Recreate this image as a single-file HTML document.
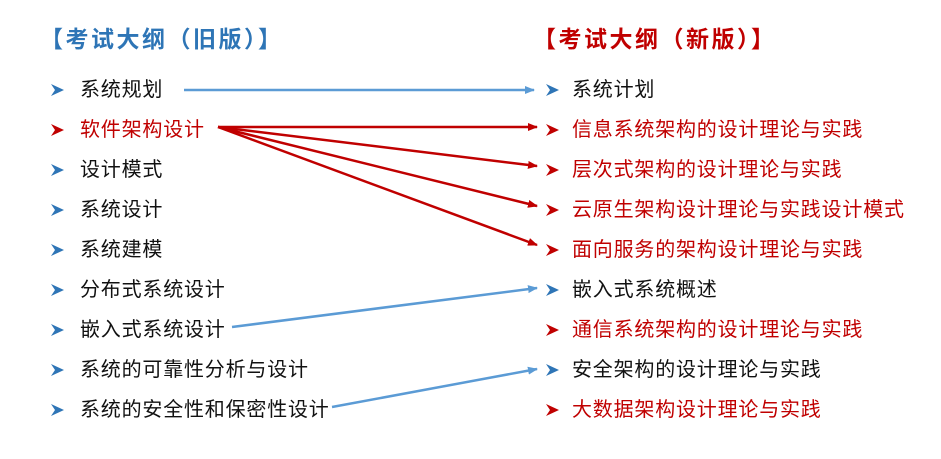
<!DOCTYPE html>
<html><head><meta charset="utf-8"><style>
body{margin:0;width:941px;height:459px;background:#fff;position:relative;overflow:hidden;font-family:"Liberation Sans","Noto Sans CJK SC",sans-serif}
.t{position:absolute;font-size:20px;letter-spacing:0.8px;line-height:24px;white-space:nowrap;color:#111}
.r{color:#c00000}
.h{position:absolute;font-size:23px;letter-spacing:2.5px;font-weight:bold;line-height:28px;white-space:nowrap}
</style></head><body>
<div class="h" style="left:40px;top:25px;color:#2e75b6">【考试大纲（旧版）】</div>
<div class="h" style="left:533px;top:25px;color:#c00000">【考试大纲（新版）】</div>

<div class="t" style="left:80px;top:78px">系统规划</div>
<div class="t r" style="left:80px;top:118px">软件架构设计</div>
<div class="t" style="left:80px;top:158px">设计模式</div>
<div class="t" style="left:80px;top:198px">系统设计</div>
<div class="t" style="left:80px;top:238px">系统建模</div>
<div class="t" style="left:80px;top:278px">分布式系统设计</div>
<div class="t" style="left:80px;top:318px">嵌入式系统设计</div>
<div class="t" style="left:80px;top:358px">系统的可靠性分析与设计</div>
<div class="t" style="left:80px;top:398px">系统的安全性和保密性设计</div>

<div class="t" style="left:572px;top:78px">系统计划</div>
<div class="t r" style="left:572px;top:118px">信息系统架构的设计理论与实践</div>
<div class="t r" style="left:572px;top:158px">层次式架构的设计理论与实践</div>
<div class="t r" style="left:572px;top:198px">云原生架构设计理论与实践设计模式</div>
<div class="t r" style="left:572px;top:238px">面向服务的架构设计理论与实践</div>
<div class="t" style="left:572px;top:278px">嵌入式系统概述</div>
<div class="t r" style="left:572px;top:318px">通信系统架构的设计理论与实践</div>
<div class="t" style="left:572px;top:358px">安全架构的设计理论与实践</div>
<div class="t r" style="left:572px;top:398px">大数据架构设计理论与实践</div>

<svg width="941" height="459" style="position:absolute;left:0;top:0">
<defs>
<g id="bb"><path d="M0,-6 L13,0 L0,6 L4,0 Z" fill="#2e75b6"/></g>
<g id="br"><path d="M0,-6 L13,0 L0,6 L4,0 Z" fill="#c00000"/></g>
<marker id="mb" markerWidth="10" markerHeight="8" refX="9" refY="4" orient="auto" markerUnits="userSpaceOnUse"><path d="M0,0 L10,4 L0,8 Z" fill="#5b9bd5"/></marker>
<marker id="mr" markerWidth="10" markerHeight="8" refX="9" refY="4" orient="auto" markerUnits="userSpaceOnUse"><path d="M0,0 L10,4 L0,8 Z" fill="#c00000"/></marker>
</defs>
<use href="#bb" x="51" y="90"/><use href="#br" x="51" y="130"/><use href="#bb" x="51" y="170"/>
<use href="#bb" x="51" y="210"/><use href="#bb" x="51" y="250"/><use href="#bb" x="51" y="290"/>
<use href="#bb" x="51" y="330"/><use href="#bb" x="51" y="370"/><use href="#bb" x="51" y="410"/>
<use href="#bb" x="546" y="90"/><use href="#br" x="546" y="130"/><use href="#br" x="546" y="170"/>
<use href="#br" x="546" y="210"/><use href="#br" x="546" y="250"/><use href="#bb" x="546" y="290"/>
<use href="#br" x="546" y="330"/><use href="#bb" x="546" y="370"/><use href="#br" x="546" y="410"/>
<g stroke-width="2.5" fill="none">
<line x1="184" y1="90" x2="534" y2="90" stroke="#5b9bd5" marker-end="url(#mb)"/>
<line x1="218" y1="127" x2="537" y2="127" stroke="#c00000" marker-end="url(#mr)"/>
<line x1="218" y1="127" x2="537" y2="166" stroke="#c00000" marker-end="url(#mr)"/>
<line x1="218" y1="127" x2="537" y2="206" stroke="#c00000" marker-end="url(#mr)"/>
<line x1="218" y1="127" x2="537" y2="245" stroke="#c00000" marker-end="url(#mr)"/>
<line x1="232" y1="327" x2="537" y2="288" stroke="#5b9bd5" marker-end="url(#mb)"/>
<line x1="332" y1="407" x2="537" y2="369" stroke="#5b9bd5" marker-end="url(#mb)"/>
</g>
</svg>
</body></html>
